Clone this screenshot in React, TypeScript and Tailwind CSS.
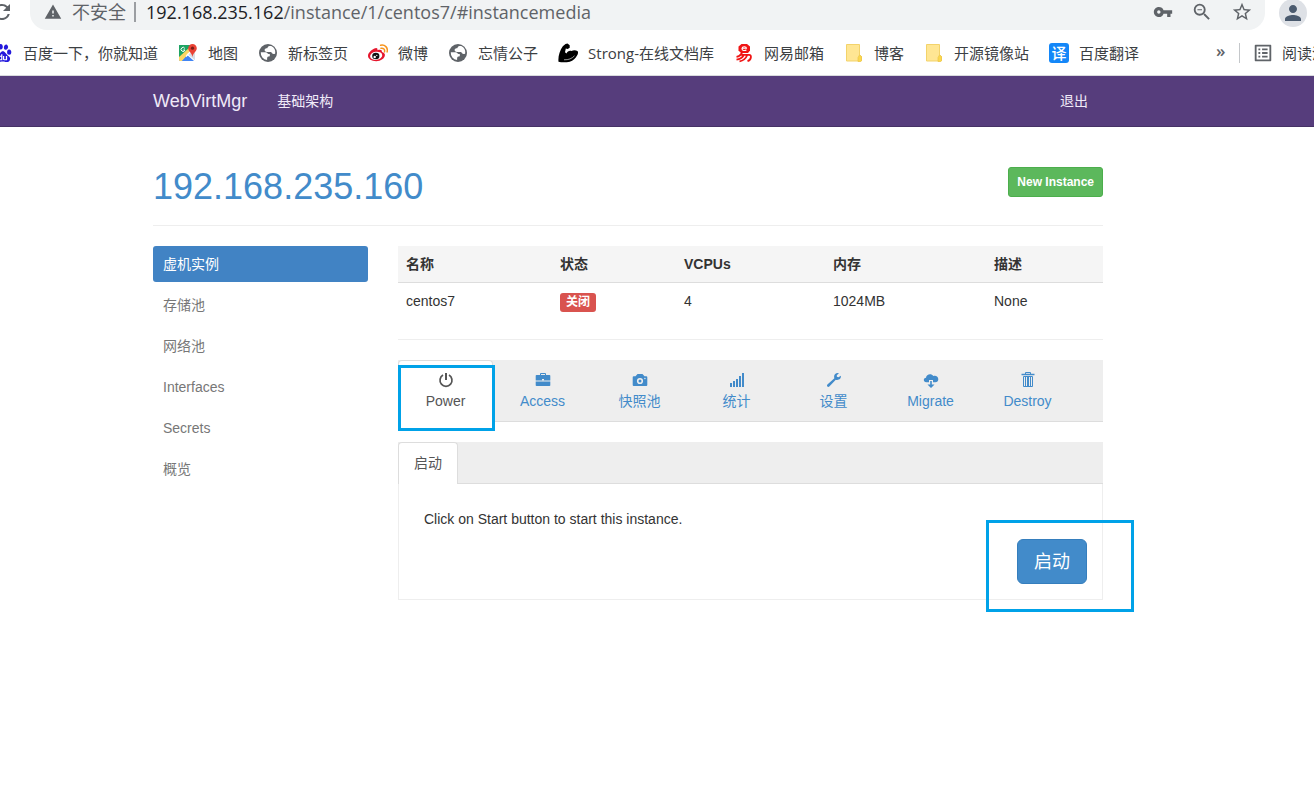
import type { ReactNode } from "react";
import { MdRefresh, MdWarning, MdVpnKey, MdZoomOut, MdStarBorder, MdPerson, MdOutlineListAlt } from "react-icons/md";
import { SiBaidu } from "react-icons/si";

const UI_FONT = "font-['Open_Sans','Noto_Sans_CJK_SC',sans-serif]";
const PAGE_FONT = "font-['Liberation_Sans','Noto_Sans_CJK_SC',sans-serif]";

function MapsIcon() {
  return (
    <svg width="20" height="20" viewBox="0 0 20 20" aria-hidden="true">
      <rect x="1" y="2" width="16" height="16" rx="1" fill="#4b8df8" />
      <path d="M1 3a1 1 0 0 1 1-1h13L1 16z" fill="#1fa463" />
      <path d="M1 14 12 4l3 3L4 18H2a1 1 0 0 1-1-1z" fill="#fdd663" />
      <path d="M4 18l6-6.500 6 6.500z" fill="#4285f4" />
      <path d="M10 11l7 6.500V9l-4-2z" fill="#d9dde2" />
      <path d="M8 13.500 14 7M9 11l8 7" stroke="#fff" strokeWidth="1.200" />
      <path d="M1 3a1 1 0 0 1 1-1h9.500v2L1 13z" fill="#1fa463" />
      <path d="M6.800 5.400A2 2 0 1 0 7 7H5.300" fill="none" stroke="#fff" strokeWidth="1" />
      <path d="M14.500 1a4.300 4.300 0 0 0-4.300 4.300c0 3.200 3.400 4 4.300 8.700.9-4.700 4.300-5.500 4.300-8.700A4.300 4.300 0 0 0 14.500 1z" fill="#ea4335" />
      <circle cx="14.500" cy="5.200" r="1.600" fill="#7b1d16" />
    </svg>
  );
}

function GlobeIcon() {
  return (
    <svg width="20" height="20" viewBox="0 0 20 20" aria-hidden="true">
      <circle cx="10" cy="10" r="9" fill="#5f6368" />
      <path d="M2.800 9.300h4.700c2 0 1.600 1.500 2.900 1.700h1.400v2.300c-1.900 0-2.700.8-2.700 2.100v1.700A7.200 7.200 0 0 1 2.800 9.300z" fill="#fff" />
      <path d="M11.500 3h1.700a7.200 7.200 0 0 1 4 7.500c-1.200.9-2.700.6-3.300-.6-.4-.9-1.200-.9-2.300-.9H9c-1.600 0-2.400-.8-2.400-1.900 0-1.200 1-1.800 2.600-1.800.6-.5.500-1.200 1-1.700z" fill="#fff" />
    </svg>
  );
}

function WeiboIcon() {
  return (
    <svg width="20" height="20" viewBox="0 0 20 20" aria-hidden="true">
      <path d="M7.500 5.200c1.400-.4 2.400.5 1.900 2 2.600-1 5-.5 4.500 1.700 2 .6 3 1.600 3 3.100 0 3.300-4 6.200-8.700 6.200C3.600 18.200 0 16 0 12.800c0-3.300 4.500-7 7.500-7.600z" fill="#e6162d" />
      <ellipse cx="8.200" cy="12.800" rx="6.100" ry="4.100" fill="#fff" transform="rotate(-8 8.200 12.800)" />
      <ellipse cx="7.800" cy="13" rx="3.600" ry="3.300" fill="#111" />
      <circle cx="6.700" cy="14" r="1.200" fill="#fff" />
      <circle cx="8.800" cy="12.400" r=".6" fill="#fff" />
      <path d="M13 5.300c2.400-.5 4.200 1.300 3.500 3.600M12.600 2.300c4.200-1 7.700 2.400 6.500 6.600" fill="none" stroke="#f7941d" strokeWidth="1.500" strokeLinecap="round" />
    </svg>
  );
}

function BicepsIcon() {
  return (
    <svg width="20" height="20" viewBox="0 0 20 20" aria-hidden="true">
      <path d="M4.800 3.200 7.500.9 9.500.5l2.200 1.800v2.400l-2 1.200-1.900-.3-.8 3.600 1.500 1.200c1-2.200 2.800-3 5-2.400 1.800-1.200 4.500-1 6.200.2.600 1.200.3 2.800-.5 4-1.700 3-4 5.600-7.400 6.500-3.800.8-7.800.9-11.300.1-.6-5.500 1.200-11 4.300-15.600z" fill="#000" />
      <path d="M6 16.800c4.500.2 8-1.200 10.500-4" fill="none" stroke="#fff" strokeWidth=".6" />
    </svg>
  );
}

function NeteaseIcon() {
  return (
    <svg width="20" height="20" viewBox="0 0 20 20" aria-hidden="true">
      <path d="M7.500 1h5.500l3 2.500v4L14 10H7L4.500 7.500v-4z" fill="#f01414" />
      <path d="M8.200 5.300h4.300C12.300 3.200 8.300 3.200 8 5.400c-.1 2.200 2.800 2.700 4.400 1.400" fill="none" stroke="#fff" strokeWidth="1.100" />
      <path d="M8 10C7 12 5 13.400 2.500 13.800M5.500 11.800H15c3 0 2.500 5-1.500 6.400M9.500 12.500C8.200 14.800 6 16.200 2.500 16.700M13 12.500C11.800 15.500 9.500 17.600 5.500 18.400" fill="none" stroke="#f01414" strokeWidth="1.800" />
    </svg>
  );
}

function FolderIcon() {
  return (
    <svg width="20" height="20" viewBox="0 0 20 20" aria-hidden="true">
      <path d="M2.500 1.500h13v10.500l2 1.500v4.500h-15z" fill="#ffe693" stroke="#f3d36b" />
      <path d="M14 18.500v-4l1.500-2.500 2 1.500v4l-1 1z" fill="#fbd84e" stroke="#ecc548" strokeWidth=".7" />
    </svg>
  );
}

function TranslateIcon() {
  return (
    <span className="flex size-5 items-center justify-center rounded-[3px] bg-[#1487f8] text-[15px] leading-5 font-medium text-white">译</span>
  );
}

function PowerIcon() {
  return (
    <svg width="16" height="16" viewBox="0 0 16 16" aria-hidden="true">
      <path d="M5 3.100a6 6 0 1 0 6 0" fill="none" stroke="currentColor" strokeWidth="1.700" />
      <path d="M8 1v7" stroke="currentColor" strokeWidth="2" />
    </svg>
  );
}

function BriefcaseIcon() {
  return (
    <svg width="16" height="16" viewBox="0 0 16 16" aria-hidden="true" fill="currentColor">
      <path d="M5 3V2q0-1 1-1h4q1 0 1 1v1h3.500q.8 0 .8.800V8.500H.7V3.800q0-.8.8-.8zM6 3h4V2H6z" />
      <path d="M.7 9.500h14.600v3.700q0 .8-.8.800h-13q-.8 0-.8-.8z" />
      <path d="M7 7h2v1.500H7z" fill="#eee" />
    </svg>
  );
}

function CameraIcon() {
  return (
    <svg width="16" height="16" viewBox="0 0 16 16" aria-hidden="true">
      <path d="M5.500 2h5l2 2.300h1.800q1 0 1 1v7.700q0 1-1 1H1.700q-1 0-1-1V5.300q0-1 1-1h1.800z" fill="currentColor" />
      <circle cx="8" cy="9" r="2.300" fill="none" stroke="#eee" strokeWidth="1.600" />
      <circle cx="12.900" cy="6.500" r=".7" fill="#eee" />
    </svg>
  );
}

function SignalIcon() {
  return (
    <svg width="16" height="16" viewBox="0 0 16 16" aria-hidden="true" fill="currentColor">
      <path d="M1 11h2v4H1zM4 9h2v6H4zM7 7h2v8H7zM10 4h2v11h-2zM13 1h2v14h-2z" />
    </svg>
  );
}

function WrenchIcon() {
  return (
    <svg width="16" height="16" viewBox="0 0 16 16" aria-hidden="true" fill="currentColor">
      <path d="M14.800 3.700 12.500 5.200 10.900 4.700 10.800 3.200 12.900 1.300C10.600.5 8.200 2 8.100 4.500c0 .7.100 1.200.3 1.700l-7 6.300c-1.300 1.300.6 3.300 1.900 2l6.500-6.800c3 .9 5.700-1.300 5-4z" />
    </svg>
  );
}

function CloudDownloadIcon() {
  return (
    <svg width="16" height="16" viewBox="0 0 16 16" aria-hidden="true" fill="currentColor">
      <path d="M3.300 10.200C.1 10 0 5.900 3 5.800 3.200 2.100 8.400.7 10.300 4.100c2.600-.9 5 .7 5 3.200 0 1.800-1.200 2.900-3 2.900H10V8H6v2.200z" />
      <path d="M7.200 9h1.600v3.500h2.700L8 16l-3.500-3.500h2.700z" />
    </svg>
  );
}

function TrashIcon() {
  return (
    <svg width="16" height="16" viewBox="0 0 16 16" aria-hidden="true" fill="none" stroke="currentColor">
      <path d="M5.500 2.500v-2h5v2" />
      <path d="M1.500 2.500h13" strokeWidth="1.500" />
      <path d="M3.500 4.500h9v10h-9zM5.500 5v9M7.500 5v9M8.500 5v9M10.500 5v9" />
    </svg>
  );
}

const bookmarks: { label: string; icon: ReactNode }[] = [
  { label: "百度一下，你就知道", icon: <SiBaidu className="size-[18px] text-[#2319dc]" /> },
  { label: "地图", icon: <MapsIcon /> },
  { label: "新标签页", icon: <GlobeIcon /> },
  { label: "微博", icon: <WeiboIcon /> },
  { label: "忘情公子", icon: <GlobeIcon /> },
  { label: "Strong-在线文档库", icon: <BicepsIcon /> },
  { label: "网易邮箱", icon: <NeteaseIcon /> },
  { label: "博客", icon: <FolderIcon /> },
  { label: "开源镜像站", icon: <FolderIcon /> },
  { label: "百度翻译", icon: <TranslateIcon /> },
];

const sections = ["虚机实例", "存储池", "网络池", "Interfaces", "Secrets", "概览"];

const actions: { label: string; icon: ReactNode }[] = [
  { label: "Power", icon: <PowerIcon /> },
  { label: "Access", icon: <BriefcaseIcon /> },
  { label: "快照池", icon: <CameraIcon /> },
  { label: "统计", icon: <SignalIcon /> },
  { label: "设置", icon: <WrenchIcon /> },
  { label: "Migrate", icon: <CloudDownloadIcon /> },
  { label: "Destroy", icon: <TrashIcon /> },
];

function BrowserBar() {
  return (
    <div className={`${UI_FONT} overflow-hidden border-b border-[#d9dbde] bg-white whitespace-nowrap text-[#5f6368]`}>
      <div className="flex h-[30px] items-start">
        <button aria-label="Reload" className="-ml-2.5 flex h-6 w-10 shrink-0 items-center">
          <MdRefresh className="size-6" />
        </button>
        <div className="flex h-[30px] min-w-0 flex-1 items-start rounded-b-[17px] bg-[#f1f3f4] pr-3 pl-3.5">
          <div className="flex h-6 min-w-0 flex-1 items-center text-[18px] leading-6">
            <MdWarning className="mr-2.5 size-[18px] shrink-0" />
            <span>不安全</span>
            <span className="mx-2 h-5 w-0.5 bg-[#9b9ea2]" />
            <a href="#instancemedia" className="ml-0.5 text-[#5f6368]">
              <span className="text-[#202124]">192.168.235.162</span>/instance/1/centos7/#instancemedia
            </a>
          </div>
          <div className="flex h-6 items-center gap-[18px]">
            <button aria-label="Passwords"><MdVpnKey className="size-5" /></button>
            <button aria-label="Zoom"><MdZoomOut className="size-[22px]" /></button>
            <button aria-label="Bookmark"><MdStarBorder className="size-[22px]" /></button>
          </div>
        </div>
        <button aria-label="Profile" className="-mt-px mr-[7px] ml-3.5 flex size-7 items-center justify-center rounded-full bg-[#dee1e6] text-[#4a5a6e]">
          <MdPerson className="size-6" />
        </button>
      </div>
      <div className="flex h-[45px] items-center text-[15px] leading-5">
        <nav className="-ml-[7px] flex min-w-0 flex-1 gap-5 overflow-hidden text-[#3c4043]">
          {bookmarks.map((b) => (
            <a key={b.label} href="#" className="flex shrink-0 items-center gap-2.5">
              <span className="flex size-5 items-center justify-center">{b.icon}</span>
              {b.label}
            </a>
          ))}
        </nav>
        <div className="flex h-[45px] w-[98px] shrink-0 items-center overflow-hidden">
          <button aria-label="More bookmarks" className="w-[23px] shrink-0 pb-1 text-left text-[17px] leading-6 font-semibold">»</button>
          <span className="mr-3 h-5 w-px shrink-0 bg-[#c4c7ca]" />
          <a href="#" className="flex items-center gap-2 text-[#3c4043]">
            <MdOutlineListAlt className="size-[22px] shrink-0 text-[#5f6368]" />
            阅读清单
          </a>
        </div>
      </div>
    </div>
  );
}

export default function App() {
  return (
    <div className={`${PAGE_FONT} min-h-screen bg-white text-[14px] leading-5 text-[#333]`}>
      <BrowserBar />
      <header className="border-b border-[#463265] bg-[#563d7c] pr-[58px]">
        <div className="mx-auto flex h-[50px] max-w-[950px] items-center text-[#f0eaf8]">
          <a href="#" className="text-[18px]">WebVirtMgr</a>
          <a href="#" className="ml-[30px]">基础架构</a>
          <a href="#" className="mr-[15px] ml-auto">退出</a>
        </div>
      </header>

      <div className="pr-[58px]">
        <div className="mx-auto max-w-[950px] pt-10">
          <div className="flex items-start justify-between border-b border-[#eee] pb-[18px]">
            <h1 className="text-[36px] leading-10 text-[#428bca]">192.168.235.160</h1>
            <button className="h-[30px] rounded-[3px] border border-[#4cae4c] bg-[#5cb85c] px-2 text-[12px] font-bold text-white">
              New Instance
            </button>
          </div>

          <div className="mt-5 flex gap-[30px]">
            <nav className="flex w-[215px] shrink-0 flex-col gap-[5px]">
              {sections.map((s, i) => (
                <a
                  key={s}
                  href="#"
                  className={`flex h-9 items-center rounded-[3px] px-2.5 ${i === 0 ? "bg-[#4183c4] text-white" : "text-[#777]"}`}
                >
                  {s}
                </a>
              ))}
            </nav>

            <main className="min-w-0 flex-1">
              <table className="w-full table-fixed text-left">
                <thead className="border-b border-[#ddd] bg-[#f5f5f5]">
                  <tr className="h-9">
                    <th className="w-[154px] px-2">名称</th>
                    <th className="w-[124px] px-2">状态</th>
                    <th className="w-[149px] px-2">VCPUs</th>
                    <th className="w-[161px] px-2">内存</th>
                    <th className="px-2">描述</th>
                  </tr>
                </thead>
                <tbody>
                  <tr className="h-[38px]">
                    <td className="px-2">centos7</td>
                    <td className="px-2">
                      <span className="inline-block h-[19px] rounded-[3px] bg-[#d9534f] px-1.5 align-middle text-[12px] leading-[18px] font-bold text-white">
                        关闭
                      </span>
                    </td>
                    <td className="px-2">4</td>
                    <td className="px-2">1024MB</td>
                    <td className="px-2">None</td>
                  </tr>
                </tbody>
              </table>
              <hr className="mt-[19px] mb-5 border-[#eee]" />

              <div className="flex h-[62px] border-b border-[#ddd] bg-[#eee]" role="tablist">
                {actions.map((a, i) => (
                  <button
                    key={a.label}
                    role="tab"
                    aria-selected={i === 0}
                    className={`relative mr-0.5 flex h-[62px] w-[95px] flex-col items-center gap-0.5 ${
                      i === 0 ? "rounded-t border border-b-0 border-[#ddd] bg-white pt-2.5 text-[#555]" : "pt-[11px] text-[#428bca]"
                    }`}
                  >
                    <span className="flex h-[18px] items-center justify-center">{a.icon}</span>
                    {a.label}
                    {i === 0 && <span className="absolute top-1 -right-[3px] -bottom-[9px] -left-px border-3 border-[#00a2e8]" />}
                  </button>
                ))}
              </div>

              <div className="mt-5 flex h-[42px] border-b border-[#ddd] bg-[#eee]" role="tablist">
                <button role="tab" aria-selected="true" className="h-[42px] rounded-t border border-b-0 border-[#ddd] bg-white px-[15px] pb-0.5 text-[#555]">
                  启动
                </button>
              </div>
              <section className="border border-t-0 border-[#eee] px-[15px] pt-[25px] pb-[15px]">
                <p className="px-2.5">Click on Start button to start this instance.</p>
                <div className="mt-2.5 flex justify-end">
                  <div className="relative">
                    <button className="h-[45px] rounded-md border border-[#357ebd] bg-[#428bca] px-4 text-[18px] text-white">启动</button>
                    <span className="pointer-events-none absolute -top-[19px] -right-[47px] -bottom-7 -left-[31px] border-3 border-[#00a2e8]" />
                  </div>
                </div>
              </section>
            </main>
          </div>
        </div>
      </div>
    </div>
  );
}
